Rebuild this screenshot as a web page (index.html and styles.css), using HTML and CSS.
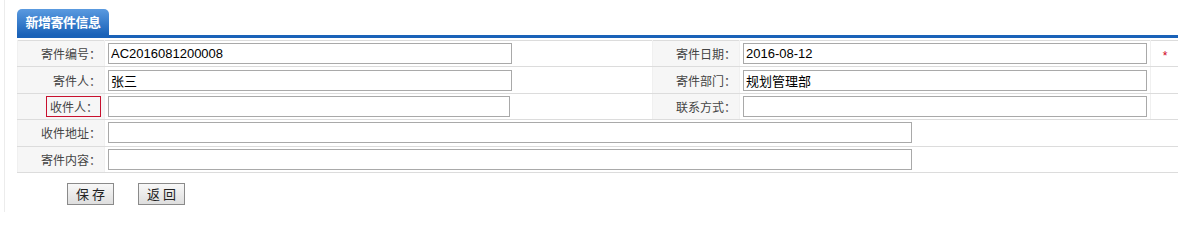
FILE: index.html
```html
<!DOCTYPE html>
<html>
<head>
<meta charset="utf-8">
<link rel="stylesheet" href="styles.css">
</head>
<body>
<div class="page">
  <div class="tabs"><div class="tab">新增寄件信息</div></div>
  <table class="form">
    <colgroup>
      <col class="c-label"><col class="c-field"><col class="c-label2"><col class="c-field2"><col class="c-extra">
    </colgroup>
    <tr>
      <td class="lbl">寄件编号：</td>
      <td><input class="inp" type="text" value="AC2016081200008"></td>
      <td class="lbl">寄件日期：</td>
      <td><input class="inp" type="text" value="2016-08-12"></td>
      <td class="req">*</td>
    </tr>
    <tr>
      <td class="lbl">寄件人：</td>
      <td><input class="inp" type="text" value="张三"></td>
      <td class="lbl">寄件部门：</td>
      <td><input class="inp" type="text" value="规划管理部"></td>
      <td></td>
    </tr>
    <tr>
      <td class="lbl"><span class="err">收件人：</span></td>
      <td><input class="inp narrow" type="text" value=""></td>
      <td class="lbl">联系方式：</td>
      <td><input class="inp" type="text" value=""></td>
      <td></td>
    </tr>
    <tr>
      <td class="lbl">收件地址：</td>
      <td colspan="4"><input class="inp long" type="text" value=""></td>
    </tr>
    <tr>
      <td class="lbl">寄件内容：</td>
      <td colspan="4"><input class="inp long" type="text" value=""></td>
    </tr>
  </table>
  <div class="actions">
    <button class="btn">保 存</button>
    <button class="btn">返 回</button>
  </div>
</div>
</body>
</html>
```
FILE: styles.css
```css
html, body {
  margin: 0;
  padding: 0;
  background: #fff;
  font-family: "Liberation Sans", "Noto Sans CJK SC", sans-serif;
  font-size: 12px;
  color: #333;
  overflow: hidden;
}
.page {
  box-sizing: border-box;
  margin-left: 4px;
  border-left: 1px solid #ececec;
  padding-left: 12px;
  padding-top: 9px;
  height: 212px;
}
.tabs {
  border-bottom: 3px solid #1a62b8;
  height: 26px;
  display: flex;
}
.tab {
  width: 92px;
  height: 26px;
  box-sizing: border-box;
  border-radius: 5px 5px 0 0;
  background: linear-gradient(#5a9ae0, #1a62b8);
  color: #fff;
  font-weight: bold;
  font-size: 13px;
  line-height: 26px;
  text-align: center;
  font-family: "Noto Sans CJK SC", sans-serif;
  letter-spacing: -0.5px;
}
.form {
  margin-top: 2px;
  border-collapse: collapse;
  width: 1162px;
  table-layout: fixed;
  border-top: 1px solid #dcdcdc;
}
.c-label { width: 87px; }
.c-field { width: 548px; }
.c-label2 { width: 87px; }
.c-field2 { width: 411px; }
.c-extra { width: 29px; }
.form td {
  height: 26.4px;
  box-sizing: border-box;
  padding: 0 3px;
  border-bottom: 1px solid #dcdcdc;
  border-right: 1px solid #f0f0f0;
  border-left: 1px solid #f0f0f0;
  vertical-align: middle;
}
.form td.lbl {
  background: #f6f6f6;
  text-align: right;
  padding-right: 3px;
  color: #444;
  font-family: "Noto Sans CJK SC", sans-serif;
  font-size: 12px;
}
.err {
  display: inline-block;
  border: 1px solid #c8102e;
  padding: 0 2px 0 3px;
  line-height: 19px;
}
.inp {
  display: block;
  box-sizing: border-box;
  width: 404px;
  height: 21px;
  border: 1px solid #a9a9a9;
  padding: 0 2px;
  margin: 0;
  font-family: "Liberation Sans", "Noto Sans CJK SC", sans-serif;
  font-size: 13px;
  color: #000;
  background: #fff;
  outline: none;
}
.inp.narrow { width: 402px; }
.inp.long { width: 804px; }
.req {
  color: #d0021b;
  text-align: center;
  font-size: 12px;
  padding-top: 4px !important;
}
.actions {
  display: flex;
  gap: 24px;
  padding-left: 50px;
  margin-top: 10px;
}
.btn {
  width: 47px;
  height: 22px;
  padding: 0;
  border: 1px solid #8a8a8a;
  background: linear-gradient(#f8f8f8, #dedede);
  font-family: "Noto Sans CJK SC", sans-serif;
  font-size: 13px;
  color: #222;
  line-height: 20px;
}
```
